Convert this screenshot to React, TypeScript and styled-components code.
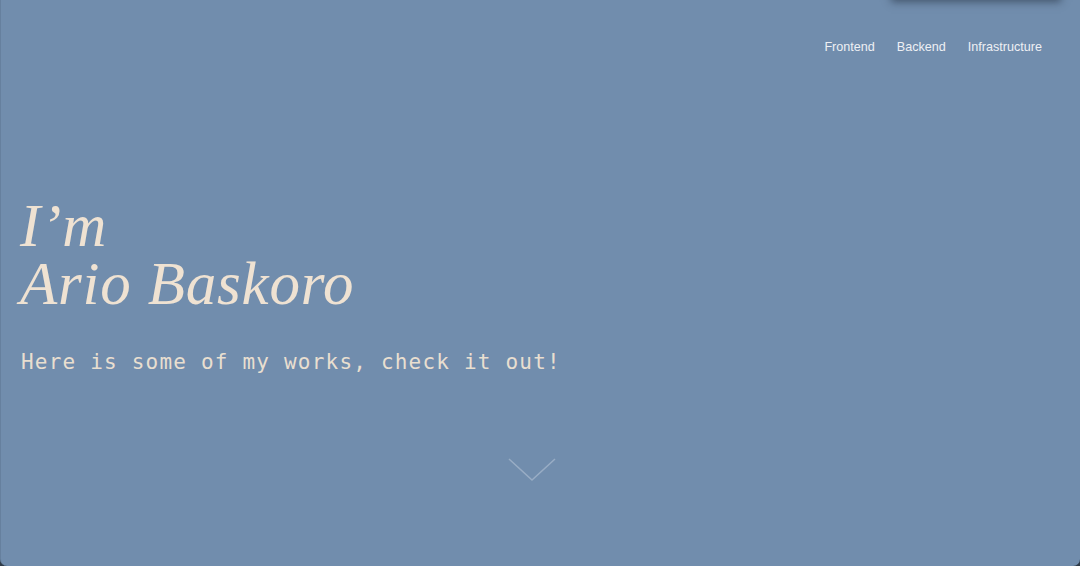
import React from "react";
import styled, { createGlobalStyle } from "styled-components";

const Global = createGlobalStyle`
  html, body { margin: 0; padding: 0; background: #2f3b48; }
  body { width: 1080px; height: 566px; overflow: hidden; }
  * { box-sizing: border-box; }
`;

const Hero = styled.section`
  position: relative;
  width: 1080px;
  height: 566px;
  background: #718dad;
  border-left: 1px solid #66809e;
  border-radius: 0 0 7px 7px;
  display: flex;
  flex-direction: column;
  overflow: hidden;
`;

const TopShadow = styled.div`
  position: absolute;
  top: -40px;
  left: 890px;
  width: 170px;
  height: 40px;
  background: #5d7593;
  box-shadow: 0 2px 8px rgba(30, 40, 55, 0.55);
`;

const Nav = styled.nav`
  display: flex;
  justify-content: flex-end;
  gap: 22px;
  padding: 39px 38px 0 0;
`;

const NavLink = styled.a`
  font-family: "Liberation Sans", Arial, sans-serif;
  font-size: 12.6px;
  color: #eef0f4;
  text-decoration: none;
  line-height: 16px;
`;

const Content = styled.div`
  padding: 142px 0 0 19px;
  display: flex;
  flex-direction: column;
`;

const Heading = styled.h1`
  margin: 0;
  font-family: "Liberation Serif", serif;
  font-style: italic;
  font-weight: 400;
  font-size: 61px;
  line-height: 58px;
  letter-spacing: 0.8px;
  color: #efe2d2;
`;

const HeadingLine = styled.span`
  display: block;
`;

const Subtitle = styled.p`
  margin: 35px 0 0 1px;
  font-family: "DejaVu Sans Mono", "Liberation Mono", monospace;
  font-size: 21px;
  line-height: 28px;
  color: #e9dfd0;
  letter-spacing: 1.2px;
`;

const Chevron = styled.svg`
  display: block;
  margin: auto auto 84px auto;
  transform: translateX(-9px);
`;

export default function App() {
  return (
    <>
      <Global />
      <Hero>
        <TopShadow />
        <Nav>
          <NavLink href="#">Frontend</NavLink>
          <NavLink href="#">Backend</NavLink>
          <NavLink href="#">Infrastructure</NavLink>
        </Nav>
        <Content>
          <Heading>
            <HeadingLine>I’m</HeadingLine>
            <HeadingLine>Ario Baskoro</HeadingLine>
          </Heading>
          <Subtitle>Here is some of my works, check it out!</Subtitle>
        </Content>
        <Chevron width="48" height="24" viewBox="0 0 48 24">
          <path d="M1 1 L24 22 L47 1" fill="none" stroke="rgba(225,232,242,0.35)" strokeWidth="1.5" />
        </Chevron>
      </Hero>
    </>
  );
}
